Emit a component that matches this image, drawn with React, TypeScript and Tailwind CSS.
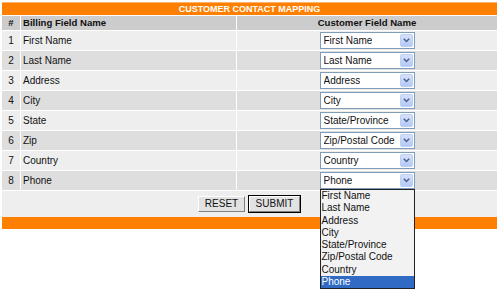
import { useState } from "react";

const fields = [
  "First Name",
  "Last Name",
  "Address",
  "City",
  "State/Province",
  "Zip/Postal Code",
  "Country",
  "Phone",
];

const billing = ["First Name", "Last Name", "Address", "City", "State", "Zip", "Country", "Phone"];

function Select({ value, open }: { value: string; open?: boolean }) {
  return (
    <div className="relative w-[95px] h-[17px] border border-[#7f9db9] bg-white flex items-center pl-[3px] text-[10px] text-[#111]">
      <span className="whitespace-nowrap overflow-hidden">{value}</span>
      <div className="absolute right-[1px] top-[1px] bottom-[1px] w-[13px] rounded-[2px] border border-[#bcd0f6] bg-gradient-to-b from-[#d4e1fc] to-[#b5c9f6] flex items-center justify-center">
        <svg width="7" height="5" viewBox="0 0 7 5">
          <path d="M0.8 0.8 L3.5 3.5 L6.2 0.8" fill="none" stroke="#4d6185" strokeWidth="1.5" />
        </svg>
      </div>
      {open && (
        <div className="absolute left-[-1px] top-full mt-[1px] w-[95px] border border-[#222] bg-[#f2f2f2] z-10">
          {fields.map((f) => (
            <div
              key={f}
              className={
                f === value
                  ? "h-[12.25px] leading-[12.25px] px-[1px] text-[10px] bg-[#316ac5] text-white"
                  : "h-[12.25px] leading-[12.25px] px-[1px] text-[10px] text-[#111]"
              }
            >
              {f}
            </div>
          ))}
        </div>
      )}
    </div>
  );
}

export default function App() {
  const [values] = useState(fields);
  return (
    <div className="w-[500px] h-[292px] bg-white overflow-hidden px-[2px] pt-[2px] font-['Liberation_Sans',Arial,sans-serif]">
      <div className="w-[495px]">
        <div className="h-[13px] bg-[#ff8000] border-t border-[#ffb366] flex items-center justify-center text-white font-bold text-[9px] leading-none">
          CUSTOMER CONTACT MAPPING
        </div>
        <div className="grid grid-cols-[18px_215px_260px] gap-[1px] pt-[1px]">
          <div className="h-[14px] bg-[#cccccc] flex items-center justify-center font-bold text-[9.6px] text-[#111]">#</div>
          <div className="h-[14px] bg-[#cccccc] flex items-center pl-[2px] font-bold text-[9.6px] text-[#111]">Billing Field Name</div>
          <div className="h-[14px] bg-[#cccccc] flex items-center justify-center font-bold text-[9.6px] text-[#111]">Customer Field Name</div>
          {billing.map((b, i) => {
            const bg = i % 2 === 0 ? "bg-[#eeeeee]" : "bg-[#dedede]";
            return [
              <div key={b + "n"} className={`h-[19px] ${bg} flex items-center justify-center text-[10px] text-[#111]`}>
                {i + 1}
              </div>,
              <div key={b + "b"} className={`h-[19px] ${bg} flex items-center pl-[2px] text-[10px] text-[#111]`}>
                {b}
              </div>,
              <div key={b + "c"} className={`h-[19px] ${bg} flex items-center justify-center`}>
                <Select value={values[i]} open={i === 7} />
              </div>,
            ];
          })}
          <div className="col-span-3 h-[26px] bg-[#eeeeee] flex items-center justify-center gap-[3px]">
            <button className="w-[47px] h-[16px] bg-[#e2e2e2] border border-t-white border-l-white border-r-[#808080] border-b-[#808080] text-[10px] text-[#111] leading-none">
              RESET
            </button>
            <div className="border border-black">
              <button className="w-[51px] h-[16px] bg-[#e2e2e2] border border-t-white border-l-white border-r-[#808080] border-b-[#808080] text-[10px] text-[#111] leading-none block">
                SUBMIT
              </button>
            </div>
          </div>
        </div>
        <div className="h-[12px] bg-[#ff8000]" />
      </div>
    </div>
  );
}
